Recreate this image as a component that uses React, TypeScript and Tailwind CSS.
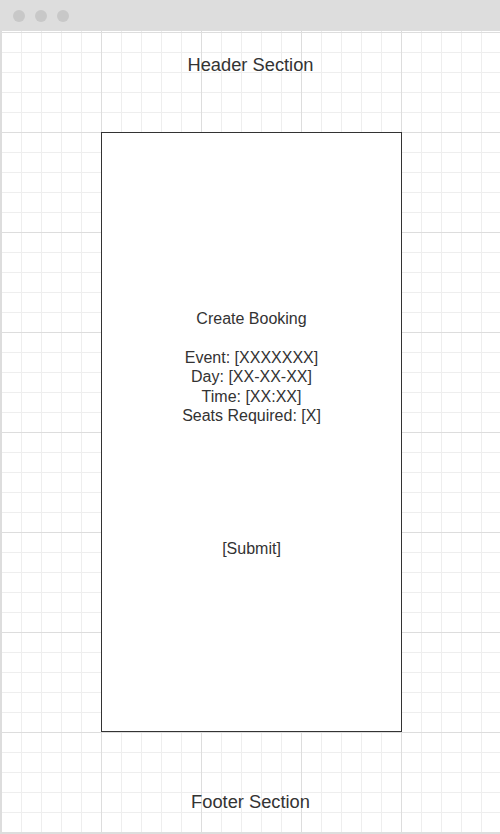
export default function App() {
  return (
    <div className="w-[500px] h-[834px] bg-white font-['Liberation_Sans',Arial,sans-serif] text-[#333333] overflow-hidden">
      {/* window chrome */}
      <div className="h-[31px] bg-[#dddddd] flex items-center gap-[10px] pl-[13px]">
        <span className="w-[12px] h-[12px] rounded-full bg-[#c8c8c8]" />
        <span className="w-[12px] h-[12px] rounded-full bg-[#c8c8c8]" />
        <span className="w-[12px] h-[12px] rounded-full bg-[#c8c8c8]" />
      </div>

      {/* canvas */}
      <div className="h-[801px] border-l border-l-[#dddddd] border-b-2 border-b-[#dddddd] box-content bg-[image:linear-gradient(#dddddd_1px,transparent_1px),linear-gradient(90deg,#dddddd_1px,transparent_1px),linear-gradient(#eeeeee_1px,transparent_1px),linear-gradient(90deg,#eeeeee_1px,transparent_1px)] bg-[size:100px_100px,100px_100px,20px_20px,20px_20px] bg-[position:0_1px,0_0,0_1px,0_0] flex flex-col">
        <div className="pt-[23px] text-center text-[18.3px] leading-[22px]">Header Section</div>

        <div className="mt-[56px] ml-[100px] w-[301px] h-[600px] border border-[#333333] bg-white flex flex-col items-center text-[16px] leading-[19.4px] text-center">
          <div className="pt-[176px]">
            <div>Create Booking</div>
            <div className="h-[19.4px]" />
            <div>Event: [XXXXXXX]</div>
            <div>Day: [XX-XX-XX]</div>
            <div>Time: [XX:XX]</div>
            <div>Seats Required: [X]</div>
          </div>
          <div className="mt-[114px]">[Submit]</div>
        </div>

        <div className="mt-[59px] text-center text-[18.3px] leading-[22px]">Footer Section</div>
      </div>
    </div>
  );
}
